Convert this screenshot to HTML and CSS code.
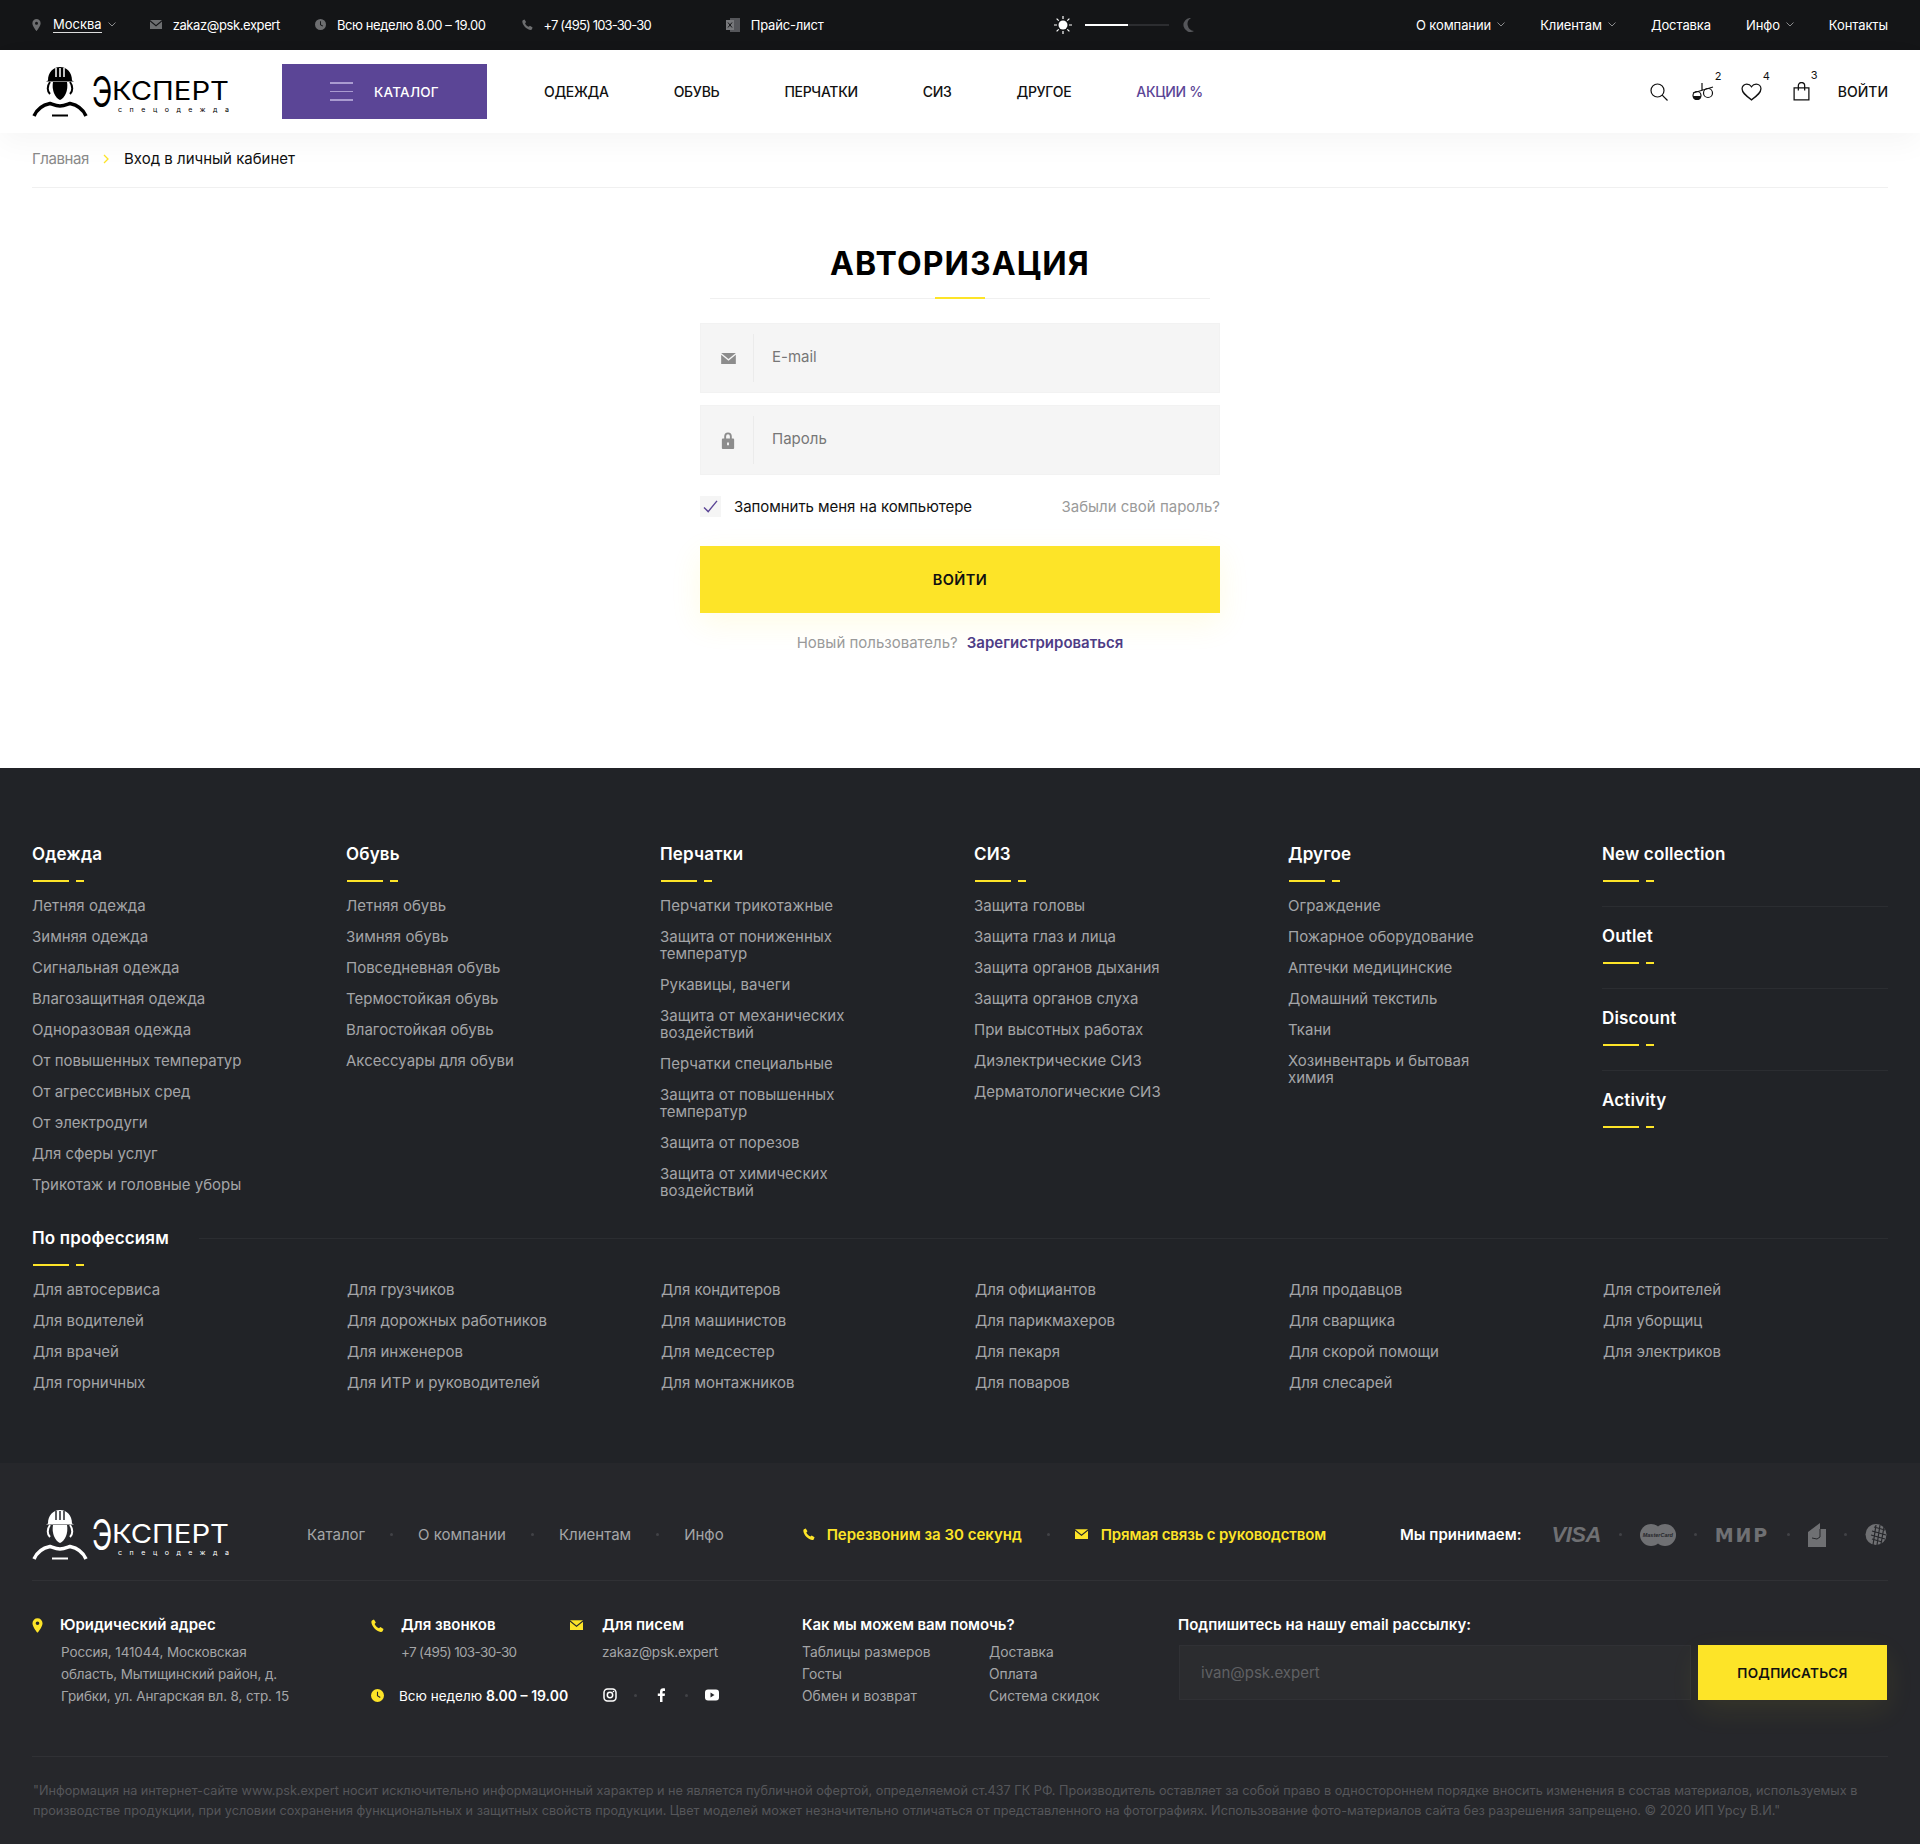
FILE: index.html
```html
<!DOCTYPE html>
<html lang="ru">
<head>
<meta charset="utf-8">
<title>Авторизация</title>
<link rel="stylesheet" href="styles.css">
</head>
<body>
<svg class="sprite" aria-hidden="true">
  <symbol id="i-pin" viewBox="0 0 12 16"><path fill-rule="evenodd" d="M6 0a5.5 5.5 0 0 1 5.5 5.5C11.500 9.500 6 16 6 16S.5 9.500.5 5.500A5.500 5.500 0 0 1 6 0zm0 3.500a2 2 0 1 0 0 4 2 2 0 0 0 0-4z"/></symbol>
  <symbol id="i-mail" viewBox="0 0 16 12"><path d="M0 0h16L8 6.500z"/><path d="M0 2l8 6.500L16 2v10H0z"/></symbol>
  <symbol id="i-clock" viewBox="0 0 14 14"><path fill-rule="evenodd" d="M7 0a7 7 0 1 1 0 14A7 7 0 0 1 7 0zM6.400 3v4.600l3.200 2 .7-1-2.700-1.700V3z"/></symbol>
  <symbol id="i-phone" viewBox="0 0 14 14"><path d="M3.200.5l2 3.300-1.300 1.500c.8 2 2.500 3.700 4.700 4.700l1.500-1.300 3.400 2-1 2.600c-.4.400-1.200.7-2 .6C5.500 12.900 1.100 8.500.4 3.500.3 2.700.6 1.900 1 1.500z"/></symbol>
  <symbol id="i-chev" viewBox="0 0 8 5"><path d="M.5.500L4 4 7.500.500" fill="none" stroke="currentColor"/></symbol>
</svg>

<div class="topbar">
  <div class="tb-item tb-city"><svg class="ic-pin"><use href="#i-pin"/></svg><a class="city-link">Москва</a><svg class="ic-chev"><use href="#i-chev"/></svg></div>
  <div class="tb-item tb-mail"><svg class="ic-mail"><use href="#i-mail"/></svg><span>zakaz@psk.expert</span></div>
  <div class="tb-item tb-time"><svg class="ic-clock"><use href="#i-clock"/></svg><span>Всю неделю 8.00 – 19.00</span></div>
  <div class="tb-item tb-phone"><svg class="ic-phone"><use href="#i-phone"/></svg><span>+7 (495) 103-30-30</span></div>
  <div class="tb-item tb-price">
    <svg class="ic-xls" viewBox="0 0 14 14"><path d="M4 0h10v14H4z" fill="#55565a"/><path d="M0 2h8v10H0z" fill="#77787b"/><path d="M2 4.500l4 5M6 4.500l-4 5" stroke="#141517"/></svg>
    <span>Прайс-лист</span></div>
  <div class="theme">
    <svg class="ic-sun" viewBox="0 0 18 18"><circle cx="9" cy="9" r="4.500" fill="#fff"/><path d="M9 0v3M9 15v3M0 9h3M15 9h3M2.600 2.600l2.100 2.100M13.300 13.300l2.100 2.100M2.600 15.400l2.100-2.100M13.300 4.700l2.100-2.100" stroke="#fff" stroke-width="1.200"/></svg>
    <div class="track"><div class="track-on"></div></div>
    <svg class="ic-moon" viewBox="0 0 12 14"><path d="M9 0a7 7 0 1 0 3 13A7 7 0 0 1 9 0z" fill="#55565a"/></svg>
  </div>
  <nav class="tb-nav">
    <a>О компании<svg class="ic-chev"><use href="#i-chev"/></svg></a>
    <a>Клиентам<svg class="ic-chev"><use href="#i-chev"/></svg></a>
    <a>Доставка</a>
    <a>Инфо<svg class="ic-chev"><use href="#i-chev"/></svg></a>
    <a>Контакты</a>
  </nav>
</div>

<header class="header">
  <svg class="logo logo-dark" viewBox="0 0 197 50">
    <path class="lg-fill" d="M16 13.500C16 5.500 21 0 28 0s12 5.500 12 13.500l2 1H14z"/>
    <path class="lg-cut" d="M24 1v9M28 1v9M32 1v9"/>
    <path class="lg-fill" d="M21 15h14c1.500 8-2 16-7 18-5-2-8.500-10-7-18z"/>
    <path class="lg-line" d="M18 15c-3 4-3 9 0 12M38 15c3 4 3 9 0 12"/>
    <path class="lg-thick" d="M2 49c3-7 9-11 16-12.500 3 1 6 2.500 10 2.500s7-1.500 10-2.500C45 38 51 42 54 49"/>
    <path class="lg-line" d="M20 48.500h16"/>
    <text class="lg-e" transform="translate(60 40) scale(.66 1)">Э</text>
    <text class="lg-t" x="80" y="33" textLength="117" lengthAdjust="spacingAndGlyphs">КСПЕРТ</text>
    <text class="lg-s" x="86" y="45" textLength="111">спецодежда</text>
  </svg>
  <a class="catalog-btn"><span class="burger"><i></i><i></i><i></i></span>КАТАЛОГ</a>
  <nav class="main-nav">
    <a>ОДЕЖДА</a><a>ОБУВЬ</a><a>ПЕРЧАТКИ</a><a>СИЗ</a><a>ДРУГОЕ</a><a class="promo">АКЦИИ %</a>
  </nav>
  <div class="tools">
    <svg class="tool t-search" viewBox="0 0 18 18"><circle cx="7.500" cy="7.500" r="6.500"/><path d="M12.200 12.200L17.500 17.500"/></svg>
    <span class="tool-wrap t-scale"><svg class="tool" viewBox="0 0 22 18"><path d="M10 0v7M1 10L21 4"/><circle cx="5" cy="12.500" r="4"/><circle cx="16" cy="10" r="4.500"/><path class="solid" d="M1 13h8a4 4 0 0 1-8 0z"/></svg><b class="cnt">2</b></span>
    <span class="tool-wrap t-heart"><svg class="tool" viewBox="0 0 20 17"><path d="M10 16C4 11.500 1 9 1 5.500 1 3 3 1 5.500 1 7.500 1 9 2 10 3.500 11 2 12.500 1 14.500 1 17 1 19 3 19 5.500 19 9 16 11.500 10 16z"/></svg><b class="cnt">4</b></span>
    <span class="tool-wrap t-bag"><svg class="tool" viewBox="0 0 16 18"><path d="M1 5.500h14V17H1zM5 8V3.500a3 3 0 0 1 6 0V8"/></svg><b class="cnt">3</b></span>
    <a class="login-link">ВОЙТИ</a>
  </div>
</header>

<div class="crumbs"><a>Главная</a><svg viewBox="0 0 6 10"><path d="M1 1l4 4-4 4" fill="none" stroke="#fde428" stroke-width="1.300"/></svg><span>Вход в личный кабинет</span></div>

<main class="auth">
  <h1 class="auth-title">АВТОРИЗАЦИЯ</h1>
  <div class="title-rule"></div>
  <div class="field"><span class="field-ic"><svg class="ic-field-mail"><use href="#i-mail"/></svg></span><span class="ph">E-mail</span></div>
  <div class="field"><span class="field-ic"><svg class="ic-lock" viewBox="0 0 14 18"><path fill-rule="evenodd" d="M3 7V4.500a4 4 0 0 1 8 0V7h1.500a1 1 0 0 1 1 1v9a1 1 0 0 1-1 1h-11a1 1 0 0 1-1-1V8a1 1 0 0 1 1-1zM5 7h4V4.500a2 2 0 0 0-4 0zM6 11v3h2v-3z"/></svg></span><span class="ph">Пароль</span></div>
  <div class="remember">
    <label class="check"><span class="box"><svg viewBox="0 0 16 14"><path d="M1 8l4.500 4.500L15 1" fill="none" stroke="#5b4596" stroke-width="1.500"/></svg></span>Запомнить меня на компьютере</label>
    <a class="forgot">Забыли свой пароль?</a>
  </div>
  <button class="submit" type="button">ВОЙТИ</button>
  <p class="reg"><span>Новый пользователь?</span><a>Зарегистрироваться</a></p>
</main>

<section class="foot-cat">
  <div class="cat-grid">
    <div><h3 class="fh">Одежда</h3><ul class="flist">
      <li>Летняя одежда</li><li>Зимняя одежда</li><li>Сигнальная одежда</li><li>Влагозащитная одежда</li><li>Одноразовая одежда</li><li>От повышенных температур</li><li>От агрессивных сред</li><li>От электродуги</li><li>Для сферы услуг</li><li>Трикотаж и головные уборы</li></ul></div>
    <div><h3 class="fh">Обувь</h3><ul class="flist">
      <li>Летняя обувь</li><li>Зимняя обувь</li><li>Повседневная обувь</li><li>Термостойкая обувь</li><li>Влагостойкая обувь</li><li>Аксессуары для обуви</li></ul></div>
    <div><h3 class="fh">Перчатки</h3><ul class="flist">
      <li>Перчатки трикотажные</li><li>Защита от пониженных температур</li><li>Рукавицы, вачеги</li><li>Защита от механических воздействий</li><li>Перчатки специальные</li><li>Защита от повышенных температур</li><li>Защита от порезов</li><li>Защита от химических воздействий</li></ul></div>
    <div><h3 class="fh">СИЗ</h3><ul class="flist">
      <li>Защита головы</li><li>Защита глаз и лица</li><li>Защита органов дыхания</li><li>Защита органов слуха</li><li>При высотных работах</li><li>Диэлектрические СИЗ</li><li>Дерматологические СИЗ</li></ul></div>
    <div><h3 class="fh">Другое</h3><ul class="flist">
      <li>Ограждение</li><li>Пожарное оборудование</li><li>Аптечки медицинские</li><li>Домашний текстиль</li><li>Ткани</li><li>Хозинвентарь и бытовая химия</li></ul></div>
    <div class="extra">
      <div class="extra-item"><h3 class="fh">New collection</h3></div>
      <div class="extra-item"><h3 class="fh">Outlet</h3></div>
      <div class="extra-item"><h3 class="fh">Discount</h3></div>
      <div class="extra-item"><h3 class="fh">Activity</h3></div>
    </div>
  </div>
  <div class="prof-head"><h3 class="fh">По профессиям</h3><span class="prof-rule"></span></div>
  <div class="prof-grid">
    <ul class="flist"><li>Для автосервиса</li><li>Для водителей</li><li>Для врачей</li><li>Для горничных</li></ul>
    <ul class="flist"><li>Для грузчиков</li><li>Для дорожных работников</li><li>Для инженеров</li><li>Для ИТР и руководителей</li></ul>
    <ul class="flist"><li>Для кондитеров</li><li>Для машинистов</li><li>Для медсестер</li><li>Для монтажников</li></ul>
    <ul class="flist"><li>Для официантов</li><li>Для парикмахеров</li><li>Для пекаря</li><li>Для поваров</li></ul>
    <ul class="flist"><li>Для продавцов</li><li>Для сварщика</li><li>Для скорой помощи</li><li>Для слесарей</li></ul>
    <ul class="flist"><li>Для строителей</li><li>Для уборщиц</li><li>Для электриков</li></ul>
  </div>
</section>

<footer class="foot">
  <div class="foot-top">
    <svg class="logo logo-light" viewBox="0 0 197 50">
      <path class="lg-fill" d="M16 13.500C16 5.500 21 0 28 0s12 5.500 12 13.500l2 1H14z"/>
      <path class="lg-cut" d="M24 1v9M28 1v9M32 1v9"/>
      <path class="lg-fill" d="M21 15h14c1.500 8-2 16-7 18-5-2-8.500-10-7-18z"/>
      <path class="lg-line" d="M18 15c-3 4-3 9 0 12M38 15c3 4 3 9 0 12"/>
      <path class="lg-thick" d="M2 49c3-7 9-11 16-12.500 3 1 6 2.500 10 2.500s7-1.500 10-2.500C45 38 51 42 54 49"/>
      <path class="lg-line" d="M20 48.500h16"/>
      <text class="lg-e" transform="translate(60 40) scale(.66 1)">Э</text>
      <text class="lg-t" x="80" y="33" textLength="117" lengthAdjust="spacingAndGlyphs">КСПЕРТ</text>
      <text class="lg-s" x="86" y="45" textLength="111">спецодежда</text>
    </svg>
    <nav class="foot-nav"><a>Каталог</a><i></i><a>О компании</a><i></i><a>Клиентам</a><i></i><a>Инфо</a></nav>
    <a class="y-link y-call"><svg class="ic-y"><use href="#i-phone"/></svg>Перезвоним за 30 секунд</a>
    <i class="sep-dot"></i>
    <a class="y-link y-mail"><svg class="ic-ym"><use href="#i-mail"/></svg>Прямая связь с руководством</a>
    <div class="pay">
      <span class="pay-label">Мы принимаем:</span>
      <span class="pay-visa">VISA</span><i></i>
      <span class="pay-mc"><b></b><b></b><em>MasterCard</em></span><i></i>
      <span class="pay-mir">МИР</span><i></i>
      <svg class="pay-wallet" viewBox="0 0 18 24"><path d="M0 9L12 0v6h6v18H0z" fill="#6f7073"/><path d="M12 6v8L9 16l-5-1" fill="none" stroke="#26272b"/></svg><i></i>
      <svg class="pay-wm" viewBox="0 0 23 23"><circle cx="11" cy="11.500" r="10.500" fill="#6f7073"/><path d="M9 4l11 3M7 8l14 4M6 12l14 4M7 16l10 3M11 2l-3 20M15 2l-3 20M19 4l-3 17" stroke="#26272b" stroke-width="1.200"/></svg>
    </div>
  </div>
  <div class="foot-info">
    <div class="fi-addr">
      <svg class="ic-y-pin"><use href="#i-pin"/></svg>
      <h4 class="fi-h">Юридический адрес</h4>
      <p class="fi-t">Россия, 141044, Московская<br>область, Мытищинский район, д.<br>Грибки, ул. Ангарская вл. 8, стр. 15</p>
    </div>
    <div class="fi-contacts">
      <div class="fc-call"><svg class="ic-y-ph"><use href="#i-phone"/></svg><h4 class="fi-h">Для звонков</h4><p class="fi-t fi-num">+7 (495) 103-30-30</p></div>
      <div class="fc-mail"><svg class="ic-y-m"><use href="#i-mail"/></svg><h4 class="fi-h">Для писем</h4><p class="fi-t">zakaz@psk.expert</p></div>
      <div class="fc-time"><svg class="ic-y-cl"><use href="#i-clock"/></svg><span>Всю неделю <b>8.00 – 19.00</b></span></div>
      <div class="fc-soc">
        <svg class="soc" viewBox="0 0 14 14"><rect x="1" y="1" width="12" height="12" rx="3.500" fill="none" stroke="#fff" stroke-width="1.500"/><circle cx="7" cy="7" r="2.700" fill="none" stroke="#fff" stroke-width="1.500"/><circle cx="10.500" cy="3.500" r=".8" fill="#fff"/></svg>
        <i></i>
        <svg class="soc" viewBox="0 0 14 14"><path d="M8.500 14V8h2.200l.3-2.500H8.500V4c0-.7.300-1.100 1.200-1.100H11V.5C10.600.4 9.900.3 9.200.3 7.200.3 6 1.500 6 3.600v1.900H3.800V8H6v6z" fill="#fff"/></svg>
        <i></i>
        <svg class="soc" viewBox="0 0 14 14"><rect x="0" y="1.500" width="14" height="11" rx="3" fill="#fff"/><path d="M5.500 4.500L9.500 7l-4 2.500z" fill="#26272b"/></svg>
      </div>
    </div>
    <div class="fi-help">
      <h4 class="fi-h fi-h-tight">Как мы можем вам помочь?</h4>
      <div class="help-grid"><a>Таблицы размеров</a><a>Доставка</a><a>Госты</a><a>Оплата</a><a>Обмен и возврат</a><a>Система скидок</a></div>
    </div>
    <div class="fi-sub">
      <h4 class="fi-h">Подпишитесь на нашу email рассылку:</h4>
      <div class="sub-row"><div class="sub-input">ivan@psk.expert</div><button class="sub-btn" type="button">ПОДПИСАТЬСЯ</button></div>
    </div>
  </div>
  <p class="legal">"Информация на интернет-сайте www.psk.expert носит исключительно информационный характер и не является публичной офертой, определяемой ст.437 ГК РФ. Производитель оставляет за собой право в одностороннем порядке вносить изменения в состав материалов, используемых в<br>производстве продукции, при условии сохранения функциональных и защитных свойств продукции. Цвет моделей может незначительно отличаться от представленного на фотографиях. Использование фото-материалов сайта без разрешения запрещено. © 2020 ИП Урсу В.И."</p>
</footer>
</body>
</html>
```

FILE: styles.css
```css
* { box-sizing: border-box; }
html, body { margin: 0; padding: 0; }
body { font-family: Inter, "Noto Sans", sans-serif; color: #111; background: #fff; width: 1920px; position: relative; }
h1, h3, h4, p, ul { margin: 0; padding: 0; }
ul { list-style: none; }
i { font-style: normal; }
.sprite { display: none; }

/* top bar */
.topbar { height: 50px; background: #141517; color: #fff; display: flex; align-items: center; padding: 0 32px 1px; font-size: 13px; }
.tb-item { display: flex; align-items: center; }
.topbar svg { fill: #6d6e70; flex: none; }
.ic-pin { width: 9px; height: 12px; margin-right: 12px; }
.city-link { border-bottom: 1px solid #ddd; line-height: 15px; }
.ic-chev { width: 8px; height: 5px; margin-left: 6px; color: #8a8b8d; }
.topbar .ic-chev { fill: none; }
.ic-mail { width: 12px; height: 9px; margin-right: 11px; }
.ic-clock { width: 11px; height: 11px; margin-right: 11px; }
.ic-phone { width: 11px; height: 11px; margin-right: 11px; }
.ic-xls { width: 14px; height: 14px; margin-right: 11px; }
.tb-mail { margin-left: 34px; letter-spacing: -.4px; }
.tb-time { margin-left: 35px; letter-spacing: -.4px; }
.tb-phone { margin-left: 36px; letter-spacing: -.85px; }
.tb-price { margin-left: 75px; letter-spacing: -.2px; }
.theme { display: flex; align-items: center; position: absolute; left: 1054px; top: 16px; }
.ic-sun { width: 18px; height: 18px; }
.track { width: 84px; height: 2px; background: #2c2d30; margin: 0 13px; }
.track-on { width: 43px; height: 2px; background: #fff; }
.ic-moon { width: 12px; height: 14px; }
.tb-nav { margin-left: auto; display: flex; letter-spacing: -.1px; }
.tb-nav a { margin-left: 35px; display: flex; align-items: center; }
.tb-nav a .ic-chev { margin-left: 6px; margin-right: 0; }

/* header */
.header { height: 83px; background: #fff; display: flex; align-items: center; padding: 0 32px; position: relative; z-index: 2; box-shadow: 0 10px 30px rgba(0,0,0,.04); }
.logo { width: 197px; height: 50px; flex: none; }
.logo .lg-fill { fill: currentColor; }
.logo .lg-line { fill: none; stroke: currentColor; stroke-width: 2; }
.logo .lg-thick { fill: none; stroke: currentColor; stroke-width: 3.500; }
.logo .lg-e { font-family: Inter, sans-serif; font-weight: 400; font-size: 42px; fill: currentColor; }
.logo .lg-t { font-family: Inter, sans-serif; font-weight: 400; font-size: 25px; fill: currentColor; }
.logo .lg-s { font-family: Inter, sans-serif; font-size: 7px; fill: currentColor; }
.logo-dark { color: #000; }
.logo-dark .lg-cut { stroke: #fff; fill: none; stroke-width: 1.500; }
.logo-light { color: #fff; }
.logo-light .lg-cut { stroke: #26272b; fill: none; stroke-width: 1.500; }
.catalog-btn { width: 205px; height: 55px; margin-left: 53px; flex: none; background: #5b4596; color: #fff; display: flex; align-items: center; font-size: 13.500px; font-weight: 500; padding-left: 48px; letter-spacing: .25px; }
.burger { display: flex; flex-direction: column; gap: 7px; margin-right: 21px; }
.burger i { display: block; width: 23px; height: 1.500px; background: #a99bd0; }
.main-nav { display: flex; margin-left: 57px; font-size: 14px; font-weight: 450; }
.main-nav a { margin-right: 65px; letter-spacing: -.3px; }
.main-nav .promo { color: #5b4596; margin-right: 0; }
.tools { margin-left: auto; display: flex; align-items: center; }
.tool { fill: none; stroke: #111; stroke-width: 1.200; display: block; }
.tool .solid { fill: #111; stroke: none; }
.t-search { width: 18px; height: 18px; margin-right: 24px; }
.tool-wrap { position: relative; display: block; }
.t-scale .tool { width: 22px; height: 18px; }
.t-scale { margin-right: 27px; }
.t-heart .tool { width: 21px; height: 18px; }
.t-heart { margin-right: 31px; }
.t-bag .tool { width: 17px; height: 19px; }
.t-bag { margin-right: 28px; }
.cnt { position: absolute; left: calc(100% + 1px); top: -13px; font-size: 11px; font-weight: 400; line-height: 12px; }
.login-link { font-size: 14px; font-weight: 450; letter-spacing: 0; }

/* crumbs */
.crumbs { height: 55px; margin: 0 32px; border-bottom: 1px solid #f0f0f0; display: flex; align-items: center; font-size: 15px; padding-bottom: 3px; }
.crumbs a { color: #8a8a8a; letter-spacing: -.4px; }
.crumbs svg { width: 6px; height: 10px; margin: 0 15px 0 14px; }

/* auth */
.auth { width: 520px; margin: 0 auto; padding: 56px 0 115px; }
.auth-title { font-size: 32px; line-height: 40px; font-weight: 700; text-align: center; color: #000; letter-spacing: 1.100px; }
.title-rule { position: relative; height: 1px; margin: 14px 10px 24px; background: #f0f0f0; }
.title-rule::after { content: ""; position: absolute; left: 225px; top: -1px; width: 50px; height: 2px; background: #fde428; }
.field { height: 70px; background: #f5f5f5; border: 1px solid #f2f2f2; display: flex; align-items: center; margin-bottom: 12px; }
.field-ic { width: 53px; height: 48px; border-right: 1px solid #ebebeb; display: flex; align-items: center; justify-content: center; flex: none; padding-left: 2px; }
.ic-field-mail { width: 15px; height: 11px; fill: #8c8c8c; }
.ic-lock { width: 14px; height: 17px; fill: #8c8c8c; }
.ph { margin: 0 0 3px 18px; font-size: 15px; color: #777; font-weight: 400; }
.remember { display: flex; justify-content: space-between; align-items: center; margin-top: 21px; font-size: 15px; height: 21px; }
.check { display: flex; align-items: center; line-height: 19px; letter-spacing: -.05px; }
.box { width: 21px; height: 21px; background: #f5f5f5; margin-right: 13px; display: flex; align-items: center; justify-content: center; }
.box svg { width: 15px; height: 13px; }
.forgot { color: #9a9a9a; }
.submit { display: block; width: 520px; height: 67px; margin-top: 29px; border: 0; background: #fde428; color: #111; font: 600 14.500px Inter, sans-serif; letter-spacing: .4px; box-shadow: 0 10px 30px rgba(253,228,40,.12); }
.reg { margin-top: 20px; text-align: center; font-size: 15px; line-height: 20px; color: #9a9a9a; }
.reg a { color: #4e3c86; font-weight: 600; margin-left: 9px; }

/* footer catalog */
.foot-cat { background: #212327; padding: 76px 32px 0; height: 695px; }
.cat-grid { display: grid; grid-template-columns: repeat(6, 286px); column-gap: 28px; height: 354px; }
.fh { position: relative; font-size: 17px; line-height: 20px; font-weight: 600; color: #fff; padding-bottom: 18px; letter-spacing: .15px; }
.fh::before { content: ""; position: absolute; left: 1px; top: 36px; width: 36px; height: 1.500px; background: #fde428; }
.fh::after { content: ""; position: absolute; left: 44px; top: 36px; width: 8px; height: 1.500px; background: #fde428; }
.flist { padding-top: 15px; }
.flist li { font-size: 15px; line-height: 17px; color: #a4a5a7; margin-bottom: 14px; max-width: 220px; }
.extra-item { border-bottom: 1px solid #2b2d31; height: 82px; padding-top: 0; }
.extra-item + .extra-item { padding-top: 19px; }
.extra-item:first-child { height: 63px; }
.extra-item:last-child { border-bottom: 0; }
.prof-head { display: flex; align-items: flex-start; margin-top: 30px; }
.prof-rule { flex: 1; height: 1px; background: #2b2d31; margin: 10px 0 0 30px; }
.prof-grid { display: grid; grid-template-columns: repeat(6, 286px); column-gap: 28px; padding-left: 1px; }

/* footer */
.foot { background: #26272b; padding: 47px 32px 23px; color: #fff; }
.foot-top { display: flex; align-items: center; height: 71px; padding-bottom: 21px; border-bottom: 1px solid #303135; }
.foot-nav { display: flex; align-items: center; margin-left: 78px; font-size: 15px; color: #a4a5a7; padding-bottom: 1px; }
.foot-nav i, .sep-dot, .pay i, .fc-soc i { display: block; width: 3px; height: 3px; border-radius: 50%; background: #414246; }
.foot-nav i { margin: 0 25px; }
.y-link { display: flex; align-items: center; font-size: 15px; font-weight: 600; color: #fde428; padding-bottom: 1px; }
.y-call { margin-left: 79px; }
.y-mail { letter-spacing: -.15px; }
.ic-y { width: 12px; height: 12px; fill: #fde428; margin-right: 12px; }
.ic-ym { width: 13px; height: 10px; fill: #fde428; margin-right: 13px; }
.sep-dot { margin: 0 25px; }
.pay { margin-left: auto; display: flex; align-items: center; }
.pay i { margin: 0 18px; }
.pay-label { font-size: 15px; font-weight: 600; margin-right: 30px; }
.pay-visa { font: italic 700 22px "Liberation Sans", sans-serif; color: #6f7073; letter-spacing: -.5px; }
.pay-mc { position: relative; display: flex; width: 36px; height: 22px; }
.pay-mc b { width: 22px; height: 22px; border-radius: 50%; background: #6f7073; flex: none; }
.pay-mc b + b { margin-left: -8px; }
.pay-mc em { position: absolute; left: 0; right: 0; top: 7px; font: italic 700 5.500px/8px "Liberation Sans", sans-serif; text-align: center; color: #26272b; }
.pay-mir { font: 700 19px "DejaVu Sans", sans-serif; color: #6f7073; letter-spacing: 1.800px; }
.pay-wallet { width: 18px; height: 24px; }
.pay-wm { width: 23px; height: 23px; }

.foot-info { display: flex; padding: 34px 0 48px; border-bottom: 1px solid #303135; height: 176px; }
.fi-h { font-size: 15px; line-height: 20px; font-weight: 600; color: #fff; }
.fi-h-tight { letter-spacing: -.1px; }
.fi-t { font-size: 13.500px; line-height: 22px; color: #a4a5a7; margin-top: 6px; letter-spacing: -.12px; }
.fi-num { letter-spacing: -.65px; }
.fi-addr { width: 339px; padding-left: 28px; position: relative; }
.ic-y-pin { position: absolute; left: 0; top: 3px; width: 11px; height: 15px; fill: #fde428; }
.fi-addr .fi-t { padding-left: 1px; }
.fi-contacts { width: 431px; display: grid; grid-template-columns: 199px 1fr; grid-template-rows: 48px auto; }
.fc-call, .fc-mail { position: relative; }
.fc-call { padding-left: 30px; }
.fc-mail { padding-left: 32px; }
.ic-y-ph { position: absolute; left: 0; top: 4px; width: 13px; height: 13px; fill: #fde428; }
.ic-y-m { position: absolute; left: 0; top: 5px; width: 13px; height: 10px; fill: #fde428; }
.fc-time { grid-row: 2; display: flex; align-items: center; font-size: 13.500px; margin-top: 21px; height: 22px; }
.fc-time b { font-weight: 600; font-size: 14px; }
.ic-y-cl { width: 13px; height: 13px; fill: #fde428; margin-right: 15px; }
.fc-soc { grid-row: 2; display: flex; align-items: center; margin-top: 21px; height: 22px; padding-left: 33px; }
.soc { width: 14px; height: 14px; }
.fc-soc i { margin: 0 17px 0 17px; background: #414246; }
.fi-help { width: 376px; }
.help-grid { display: grid; grid-template-columns: 187px 1fr; grid-auto-rows: 22px; margin-top: 6px; font-size: 13.800px; line-height: 22px; color: #a4a5a7; }
.fi-sub { flex: 1; }
.sub-row { display: flex; margin: 10px 0 0 1px; }
.sub-input { width: 512px; height: 55px; background: #2b2c2f; border: 1px solid #303135; color: #606164; font-size: 15px; line-height: 53px; padding-left: 21px; }
.sub-btn { margin-left: 7px; width: 189px; height: 55px; border: 0; background: #fde428; color: #111; font: 600 13.500px Inter, sans-serif; letter-spacing: .3px; box-shadow: 0 10px 30px rgba(253,228,40,.08); }
.legal { padding: 24px 0 0 1px; font-size: 12.700px; line-height: 20px; color: #55565a; white-space: nowrap; }
```
